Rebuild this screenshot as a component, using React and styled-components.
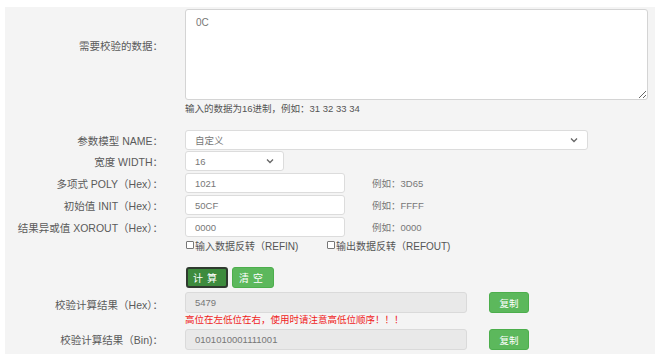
import React from "react";
import styled, { createGlobalStyle } from "styled-components";

const Global = createGlobalStyle`
  html, body { margin: 0; padding: 0; background: #fff; }
  body { font-family: "Liberation Sans", "Noto Sans CJK SC", sans-serif; font-size: 10px; color: #555; }
  * { box-sizing: border-box; }
`;

const Panel = styled.div`
  margin: 7px 6px 0 5px;
  background: #f4f4f4;
  padding: 2px 0 4px 0;
  display: flex;
  flex-direction: column;
  height: 347px;
`;

const Row = styled.div`
  display: grid;
  grid-template-columns: 158px 1fr;
  column-gap: 22px;
  align-items: ${(p) => (p.$top ? "start" : "center")};
  margin-top: ${(p) => p.$mt || 0}px;
`;

const Label = styled.div`
  text-align: right;
  color: #5a5a5a;
  font-size: 10.5px;
  white-space: nowrap;
  padding-top: ${(p) => p.$pt || 0}px;
`;

const Field = styled.div`
  display: flex;
  align-items: center;
`;

const Column = styled.div`
  display: flex;
  flex-direction: column;
`;

const TextArea = styled.textarea`
  width: 463px;
  height: 91px;
  border: 1px solid #d4d4d4;
  border-radius: 3px;
  background: #fff;
  padding: 7px 10px;
  font-family: inherit;
  font-size: 10px;
  color: #777;
  outline: none;
  resize: vertical;
`;

const Hint = styled.div`
  margin-top: 3px;
  line-height: 12px;
  color: #555;
  font-size: 9.5px;
`;

const Input = styled.div`
  width: ${(p) => p.$w}px;
  height: ${(p) => p.$h || 20}px;
  border: 1px solid ${(p) => (p.$ro ? "#dadada" : "#dcdcdc")};
  border-radius: 3px;
  background: ${(p) => (p.$ro ? "#e9e9e9" : "#fff")};
  color: #777;
  padding: 0 9px;
  display: flex;
  align-items: center;
  justify-content: space-between;
  font-size: 9.5px;
`;

const Example = styled.span`
  margin-left: 27px;
  color: #777;
  font-size: 9.5px;
`;

const CheckRow = styled.div`
  display: flex;
  align-items: center;
  height: 12px;
`;

const Check = styled.label`
  display: flex;
  align-items: center;
  color: #555;
  font-size: 10px;
  width: ${(p) => p.$w || "auto"};
  margin-left: 1px;
`;

const Box = styled.span`
  width: 8px;
  height: 8px;
  border: 1px solid #777;
  border-radius: 1px;
  background: #fff;
  margin-right: 1px;
`;

const Buttons = styled.div`
  display: flex;
  gap: 4px;
  margin-left: 1px;
`;

const Btn = styled.button`
  height: 21px;
  width: ${(p) => p.$w || 42}px;
  border-radius: 3px;
  border: ${(p) => (p.$active ? "2px solid #2f3a2f" : "1px solid #4cae4c")};
  background: ${(p) => (p.$active ? "#3d8b3d" : "#5cb85c")};
  color: #fff;
  font-family: inherit;
  font-size: 10px;
  letter-spacing: ${(p) => p.$ls || 0}px;
  padding: 0;
  display: flex;
  align-items: center;
  justify-content: center;
`;

const CopyBtn = styled(Btn)`
  margin-left: 22px;
  width: 40px;
  font-size: 9.5px;
`;

const Warn = styled.div`
  color: #f01c1c;
  font-size: 9.5px;
  line-height: 12px;
  margin-top: 1px;
`;

const Chevron = () => (
  <svg width="8" height="6" viewBox="0 0 8 6">
    <path d="M1 1.5 L4 4.5 L7 1.5" fill="none" stroke="#666" strokeWidth="1.3" />
  </svg>
);

export default function App() {
  return (
    <>
      <Global />
      <Panel>
        <Row $top>
          <Label $pt={29}>需要校验的数据：</Label>
          <Column>
            <TextArea defaultValue="0C" />
            <Hint>输入的数据为16进制，例如：31 32 33 34</Hint>
          </Column>
        </Row>

        <Row $mt={15}>
          <Label>参数模型 NAME：</Label>
          <Field>
            <Input $w={403}>
              <span>自定义</span>
              <Chevron />
            </Input>
          </Field>
        </Row>

        <Row $mt={1}>
          <Label>宽度 WIDTH：</Label>
          <Field>
            <Input $w={99}>
              <span>16</span>
              <Chevron />
            </Input>
          </Field>
        </Row>

        <Row $mt={2}>
          <Label>多项式 POLY（Hex）：</Label>
          <Field>
            <Input $w={160}>1021</Input>
            <Example>例如：3D65</Example>
          </Field>
        </Row>

        <Row $mt={2}>
          <Label>初始值 INIT（Hex）：</Label>
          <Field>
            <Input $w={160}>50CF</Input>
            <Example>例如：FFFF</Example>
          </Field>
        </Row>

        <Row $mt={2}>
          <Label>结果异或值 XOROUT（Hex）：</Label>
          <Field>
            <Input $w={160}>0000</Input>
            <Example>例如：0000</Example>
          </Field>
        </Row>

        <Row $mt={2}>
          <div />
          <CheckRow>
            <Check $w="140px">
              <Box />
              输入数据反转（REFIN)
            </Check>
            <Check>
              <Box />
              输出数据反转（REFOUT)
            </Check>
          </CheckRow>
        </Row>

        <Row $mt={16}>
          <div />
          <Buttons>
            <Btn $active $ls={4}>计算</Btn>
            <Btn $ls={4}>清空</Btn>
          </Buttons>
        </Row>

        <Row $mt={4} $top>
          <Label $pt={5}>校验计算结果（Hex）：</Label>
          <Column>
            <Field>
              <Input $w={282} $h={21} $ro>5479</Input>
              <CopyBtn>复制</CopyBtn>
            </Field>
            <Warn>高位在左低位在右，使用时请注意高低位顺序！！！</Warn>
          </Column>
        </Row>

        <Row $mt={3}>
          <Label>校验计算结果（Bin)：</Label>
          <Field>
            <Input $w={282} $h={21} $ro>0101010001111001</Input>
            <CopyBtn>复制</CopyBtn>
          </Field>
        </Row>
      </Panel>
    </>
  );
}
